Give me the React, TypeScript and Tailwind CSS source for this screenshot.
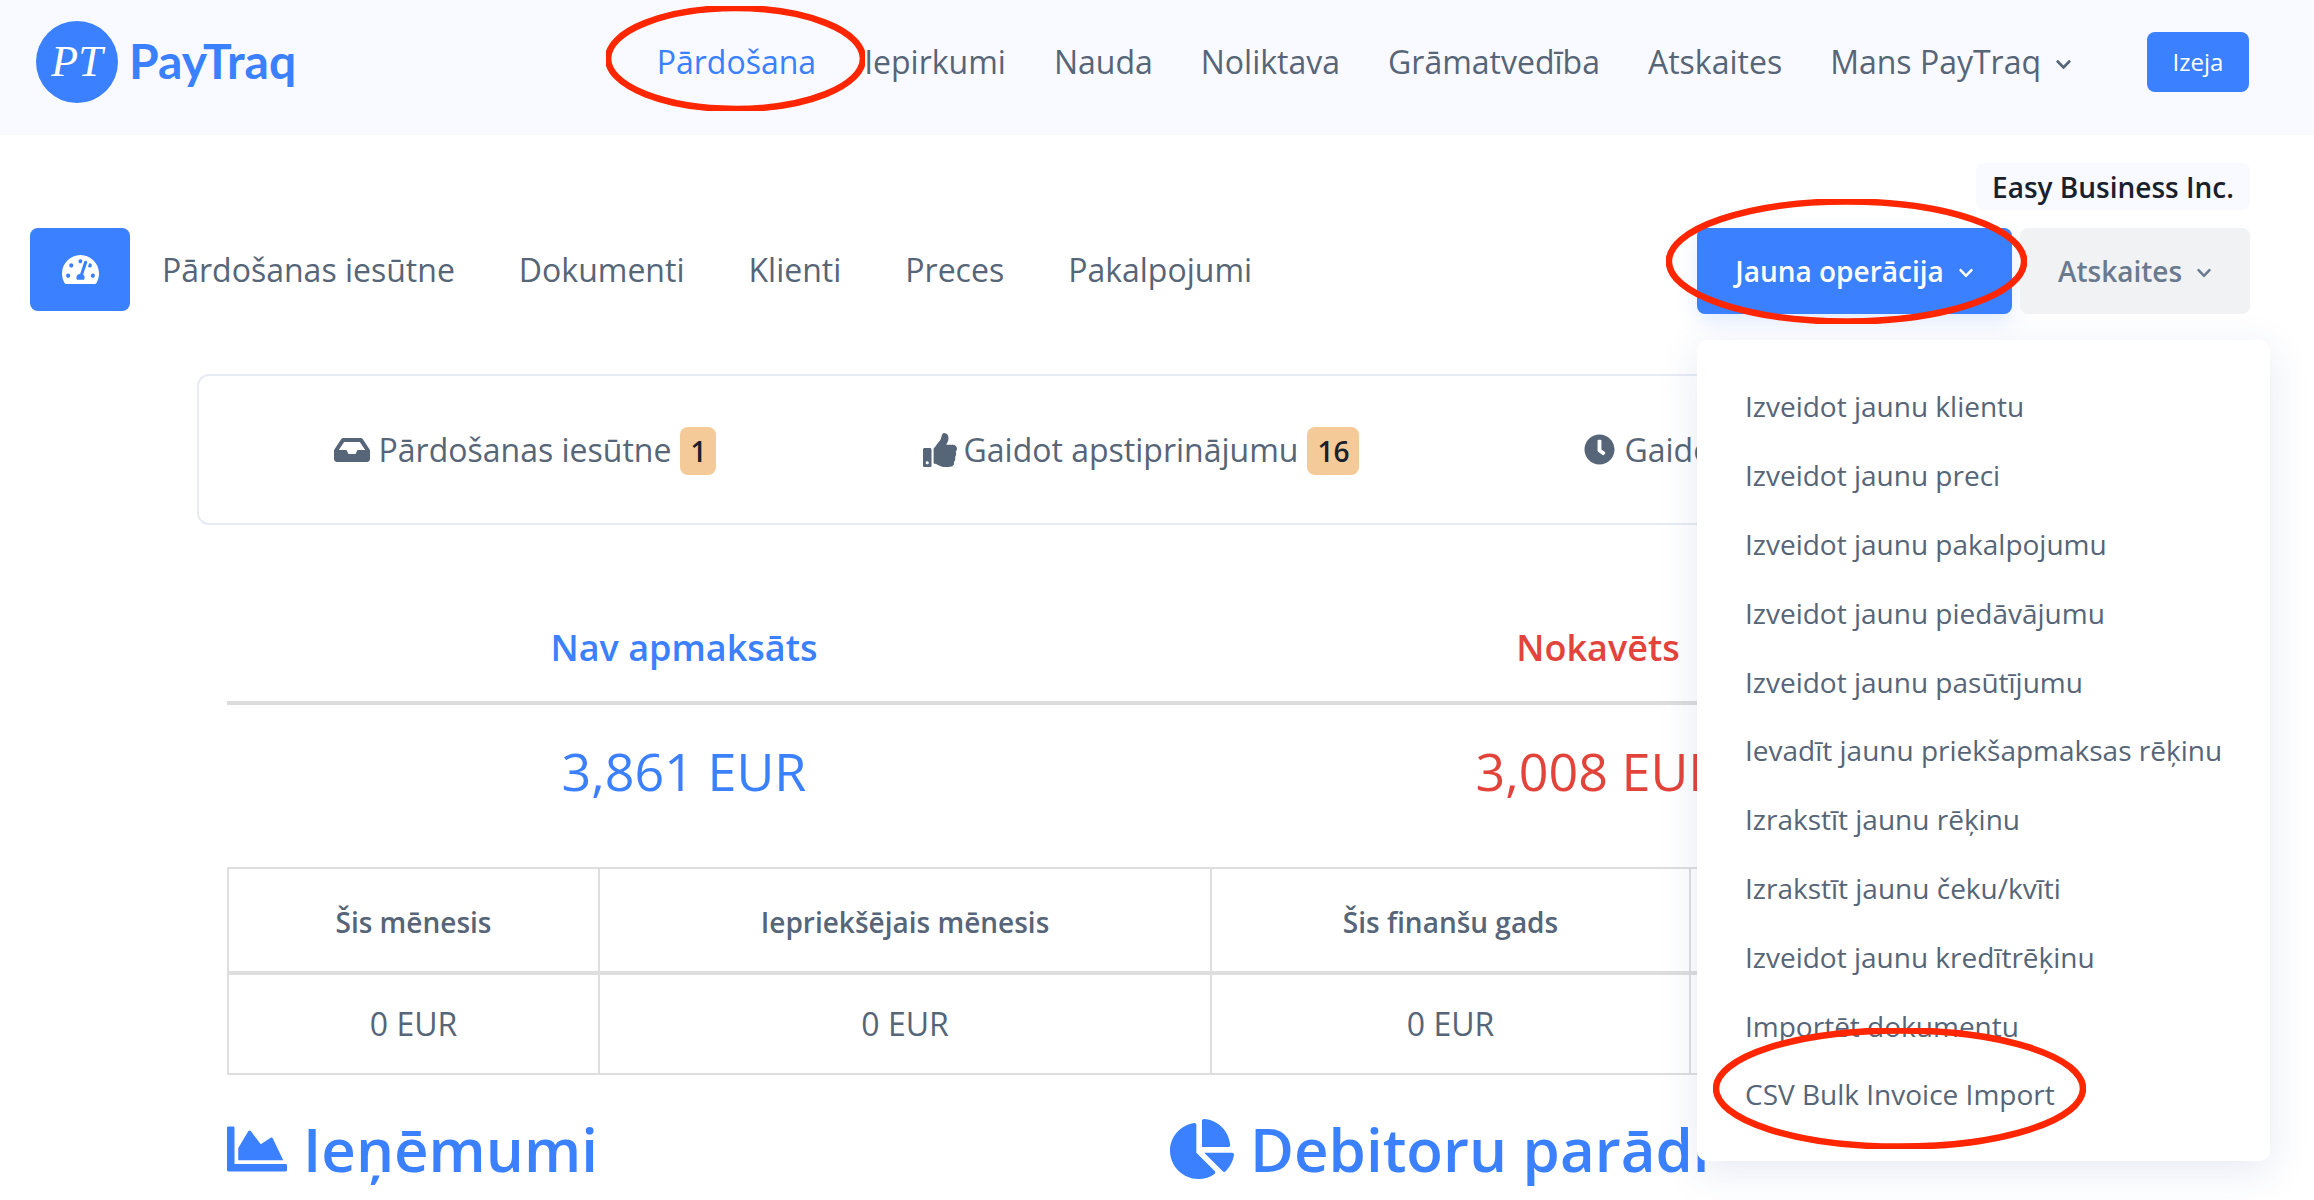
import { FaChartArea, FaChartPie, FaChevronDown, FaClock, FaInbox, FaTachometerAlt, FaThumbsUp } from 'react-icons/fa';

const TOP_NAV = ['Iepirkumi', 'Nauda', 'Noliktava', 'Grāmatvedība', 'Atskaites'];
const SUB_NAV = ['Pārdošanas iesūtne', 'Dokumenti', 'Klienti', 'Preces', 'Pakalpojumi'];
const NEW_MENU = [
  'Izveidot jaunu klientu',
  'Izveidot jaunu preci',
  'Izveidot jaunu pakalpojumu',
  'Izveidot jaunu piedāvājumu',
  'Izveidot jaunu pasūtījumu',
  'Ievadīt jaunu priekšapmaksas rēķinu',
  'Izrakstīt jaunu rēķinu',
  'Izrakstīt jaunu čeku/kvīti',
  'Izveidot jaunu kredītrēķinu',
  'Importēt dokumentu',
  'CSV Bulk Invoice Import',
];

function Ring({ className }: { className: string }) {
  return (
    <svg className={`pointer-events-none absolute ${className}`} viewBox="0 0 100 100" preserveAspectRatio="none">
      <ellipse
        cx="50"
        cy="50"
        rx="49.2"
        ry="48"
        fill="none"
        stroke="#ff2600"
        strokeWidth="6.5"
        vectorEffect="non-scaling-stroke"
      />
    </svg>
  );
}

function Badge({ children }: { children: string }) {
  return (
    <span className="mt-[2px] ml-[9px] flex h-[48px] items-center rounded-[8px] bg-[#f4cb98] px-[10px] text-[28px] font-semibold text-[#1a202c]">
      {children}
    </span>
  );
}

function Stat({ title, value, color }: { title: string; value: string; color: string }) {
  return (
    <div className={`w-[914px] shrink-0 text-center ${color}`}>
      <div className="flex h-[101px] items-center justify-center pb-[5px] text-[36px] leading-none font-semibold">{title}</div>
      <div className="h-[4px] bg-[#dcdcdc]" />
      <div className="flex h-[131px] items-center justify-center text-[52px] leading-none">{value}</div>
    </div>
  );
}

export default function App() {
  return (
    <div className="relative h-[1200px] w-[2314px] overflow-hidden bg-white font-['Open_Sans',sans-serif] text-[#566577]">
      <header className="flex h-[135px] items-center bg-[#f9faff] pr-[65px] pb-[12px] pl-[36px]">
        <div className="flex items-center">
          <div className="flex h-[82px] w-[82px] items-center justify-center rounded-full bg-[#3a80ff] font-['Liberation_Serif',serif] text-[44px] text-white italic">
            PT
          </div>
          <span className="mb-[2px] ml-[11px] font-['Lato',sans-serif] text-[48px] leading-none font-bold text-[#3a80ff]">
            PayTraq
          </span>
        </div>
        <nav className="ml-auto flex items-center gap-[48px] text-[32px]">
          <span className="text-[#3a80ff]">Pārdošana</span>
          {TOP_NAV.map((item) => (
            <span key={item}>{item}</span>
          ))}
          <span className="flex items-center gap-[14px]">
            Mans PayTraq <FaChevronDown size={17} className="mt-[5px]" />
          </span>
        </nav>
        <button type="button" className="ml-[75px] h-[60px] w-[102px] rounded-[8px] bg-[#3a80ff] text-[24px] text-white">
          Izeja
        </button>
      </header>

      <section className="pr-[64px] pl-[30px]">
        <div className="flex justify-end pt-[28px]">
          <span className="flex h-[47px] w-[274px] items-center justify-center rounded-[8px] bg-[#f9faff] text-[28px] font-semibold text-[#1a202c]">
            Easy Business Inc.
          </span>
        </div>
        <div className="mt-[18px] flex items-start">
          <button type="button" className="flex h-[83px] w-[100px] items-center justify-center rounded-[8px] bg-[#3a80ff] text-white">
            <FaTachometerAlt size={37} />
          </button>
          <nav className="ml-[32px] flex h-[83px] items-center gap-[64px] text-[32px]">
            {SUB_NAV.map((item) => (
              <span key={item}>{item}</span>
            ))}
          </nav>
          <div className="relative ml-auto flex gap-[8px]">
            <button
              type="button"
              className="flex h-[86px] w-[315px] items-center justify-center gap-[14px] rounded-[8px] bg-[#3a80ff] text-[28px] font-semibold text-white shadow-[0_8px_20px_rgba(58,128,255,0.15)]"
            >
              Jauna operācija <FaChevronDown size={16} className="mt-[4px]" />
            </button>
            <button
              type="button"
              className="flex h-[86px] w-[230px] items-center justify-center gap-[14px] rounded-[8px] bg-[#f1f2f4] text-[28px] font-semibold text-[#6a7a8e]"
            >
              Atskaites <FaChevronDown size={16} className="mt-[4px]" />
            </button>
            <ul className="absolute top-full left-0 z-10 mt-[26px] w-[573px] rounded-[10px] bg-white py-[32px] pl-[48px] text-[28px] shadow-[0_10px_40px_rgba(50,80,160,0.12)]">
              {NEW_MENU.map((item) => (
                <li key={item} className="flex h-[68.8px] items-center whitespace-nowrap">
                  {item}
                </li>
              ))}
            </ul>
          </div>
        </div>
      </section>

      <main className="w-[1918px] pl-[197px]">
        <div className="mt-[60px] flex h-[151px] w-[1918px] items-center rounded-[12px] border-2 border-[#e8ebf5] pl-[18px] text-[32px]">
          <div className="flex w-[616px] items-center justify-center">
            <FaInbox size={36} className="mr-[9px]" />
            Pārdošanas iesūtne
            <Badge>1</Badge>
          </div>
          <div className="flex w-[616px] items-center justify-center">
            <FaThumbsUp size={34} className="mr-[7px]" />
            Gaidot apstiprinājumu
            <Badge>16</Badge>
          </div>
          <div className="flex w-[616px] items-center justify-center">
            <FaClock size={31} className="mr-[9px]" />
            Gaidot apmaksu
            <Badge>12</Badge>
          </div>
        </div>

        <div className="ml-[30px]">
          <div className="mt-[75px] flex w-[1828px]">
            <Stat title="Nav apmaksāts" value="3,861 EUR" color="text-[#3a80ff]" />
            <Stat title="Nokavēts" value="3,008 EUR" color="text-[#e2433a]" />
          </div>

          <table className="mt-[31px] w-[1828px] table-fixed border-2 border-[#dedede] text-center text-[32px]">
            <colgroup>
              <col className="w-[371px]" />
              <col className="w-[612px]" />
              <col className="w-[479px]" />
              <col />
            </colgroup>
            <thead>
              <tr className="h-[105px] border-b-4 border-[#dedede]">
                <th className="border-r-2 border-[#dedede] pt-[4px] text-[28px] font-semibold">Šis mēnesis</th>
                <th className="border-r-2 border-[#dedede] pt-[4px] text-[28px] font-semibold">Iepriekšējais mēnesis</th>
                <th className="border-r-2 border-[#dedede] pt-[4px] text-[28px] font-semibold">Šis finanšu gads</th>
                <th className="pt-[4px] text-[28px] font-semibold">Kopā</th>
              </tr>
            </thead>
            <tbody>
              <tr className="h-[101px]">
                <td className="border-r-2 border-[#dedede]">0 EUR</td>
                <td className="border-r-2 border-[#dedede]">0 EUR</td>
                <td className="border-r-2 border-[#dedede]">0 EUR</td>
                <td>0 EUR</td>
              </tr>
            </tbody>
          </table>

          <div className="mt-[42px] flex text-[60px] leading-none font-semibold text-[#3a80ff]">
            <h2 className="flex w-[943px] items-center gap-[16px]">
              <FaChartArea size={60} />
              Ieņēmumi
            </h2>
            <h2 className="flex items-center gap-[16px] whitespace-nowrap">
              <FaChartPie size={64} />
              Debitoru parādi
            </h2>
          </div>
        </div>
      </main>

      {/* red review markers drawn over the page */}
      <Ring className="top-[6px] left-[606px] z-20 h-[105px] w-[259px]" />
      <Ring className="top-[199px] left-[1666px] z-20 h-[125px] w-[361px]" />
      <Ring className="top-[1028px] left-[1713px] z-20 h-[121px] w-[373px]" />
    </div>
  );
}
